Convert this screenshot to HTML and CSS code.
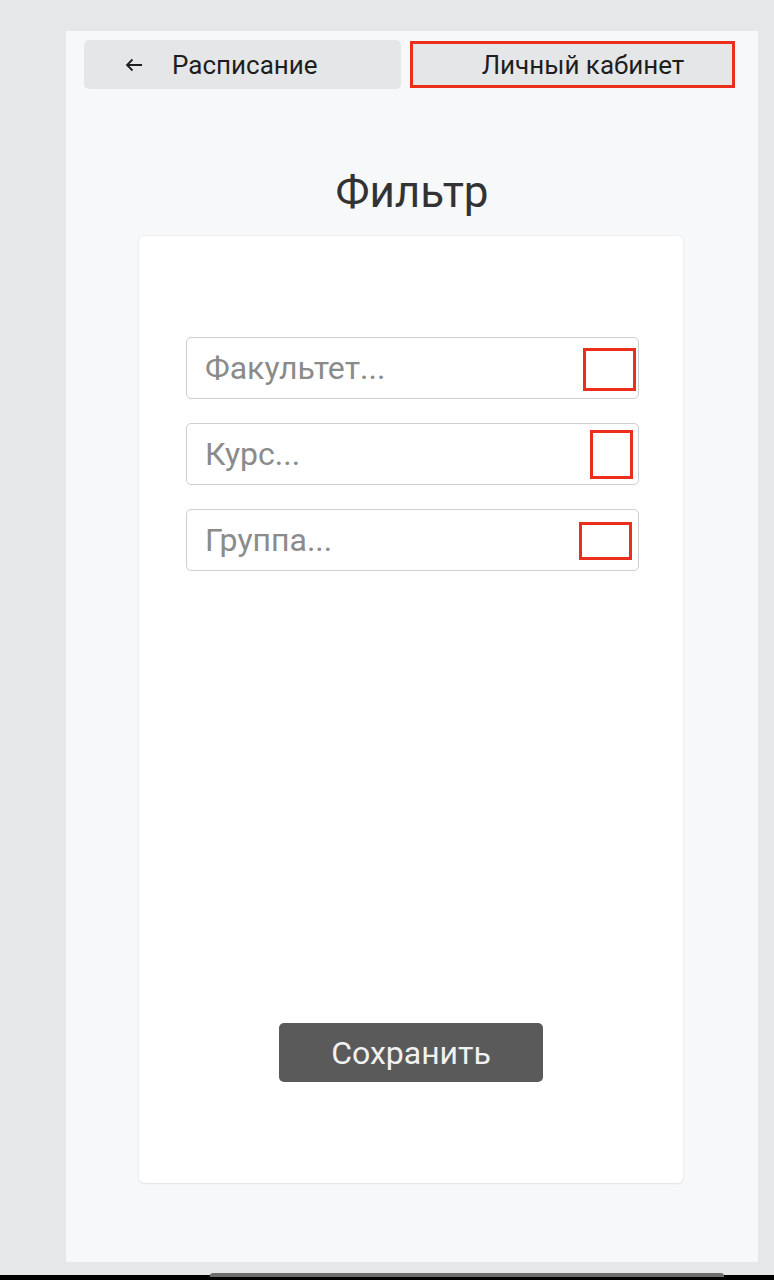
FILE: index.html
```html
<!DOCTYPE html>
<html lang="ru">
<head>
<meta charset="utf-8">
<title>Фильтр</title>
<link rel="stylesheet" href="styles.css">
</head>
<body>
<div class="screen">
  <div class="panel">
    <nav class="nav">
      <button class="nav-btn back">
        <svg class="arrow" width="18" height="14" viewBox="0 0 18 14"><path d="M17 7H2M7.5 1.5L2 7l5.5 5.5" fill="none" stroke="#1f1f1f" stroke-width="1.8"/></svg>
        <span>Расписание</span>
      </button>
      <button class="nav-btn cabinet">Личный кабинет</button>
    </nav>
    <h1 class="title">Фильтр</h1>
    <section class="card">
      <div class="fields">
        <div class="field"><span class="placeholder">Факультет...</span><span class="mark mark-1"></span></div>
        <div class="field"><span class="placeholder">Курс...</span><span class="mark mark-2"></span></div>
        <div class="field"><span class="placeholder">Группа...</span><span class="mark mark-3"></span></div>
      </div>
      <button class="save">Сохранить</button>
    </section>
  </div>
  <div class="sysbar"><div class="pill"></div></div>
</div>
</body>
</html>
```
FILE: styles.css
```css
* { box-sizing: border-box; }
html, body { margin: 0; padding: 0; }
body {
  background: #e6e7e9;
  font-family: Roboto, "Noto Sans", sans-serif;
  width: 774px;
  height: 1280px;
  overflow: hidden;
}
.screen {
  height: 1280px;
  display: flex;
  flex-direction: column;
  padding-top: 31px;
}
.panel {
  margin-left: 66px;
  width: 692px;
  height: 1231px;
  background: #f7f8fa;
  display: flex;
  flex-direction: column;
}
.nav {
  display: flex;
  align-items: center;
  margin-top: 9px;
  margin-left: 18px;
  gap: 9px;
}
.nav-btn {
  border: none;
  background: #e5e6e8;
  font-family: inherit;
  font-size: 26px;
  color: #1e1e1e;
  display: flex;
  align-items: center;
  padding: 0;
}
.back {
  width: 317px;
  height: 49px;
  border-radius: 5px;
  padding-left: 41px;
  gap: 29px;
}
.arrow { display: block; }
.cabinet {
  width: 325px;
  height: 47px;
  border: 3px solid #ec2f1c;
  justify-content: center;
  padding-left: 21px;
}
.title {
  margin: 0;
  margin-top: 79px;
  height: 68px;
  text-align: center;
  font-weight: 400;
  font-size: 44px;
  line-height: 48px;
  color: #333;
}
.card {
  width: 544px;
  height: 947px;
  margin-left: 73px;
  background: #fff;
  border-radius: 5px;
  box-shadow: 0 0 2px rgba(0,0,0,0.12), 0 1px 2px rgba(0,0,0,0.06);
  display: flex;
  flex-direction: column;
  padding: 101px 0 101px 47px;
}
.fields {
  display: flex;
  flex-direction: column;
  gap: 24px;
}
.field {
  position: relative;
  width: 453px;
  height: 62px;
  border: 1.5px solid #cfcfd1;
  border-radius: 5px;
  display: flex;
  align-items: center;
  padding-left: 18px;
}
.placeholder {
  font-size: 32px;
  color: #8b8b8b;
}
.mark {
  position: absolute;
  border: 3px solid #ec2f1c;
}
.mark-1 { right: 2px; top: 10px; width: 53px; height: 43px; }
.mark-2 { right: 5px; top: 6px; width: 43px; height: 49px; }
.mark-3 { right: 6px; top: 12px; width: 53px; height: 38px; }
.save {
  margin-top: auto;
  margin-left: 93px;
  width: 264px;
  height: 59px;
  border: none;
  border-radius: 5px;
  background: #5a5a5a;
  color: #f1f1f1;
  font-family: inherit;
  font-size: 32px;
  padding: 0;
}
.sysbar {
  margin-top: 11px;
  height: 7px;
  background: linear-gradient(#e6e7e9 0 2px, #000 2px);
  padding: 0 50px 0 210px;
}
.pill {
  width: 514px;
  height: 4px;
  background: #6e6e6e;
  border-radius: 3px 3px 0 0;
}
```
